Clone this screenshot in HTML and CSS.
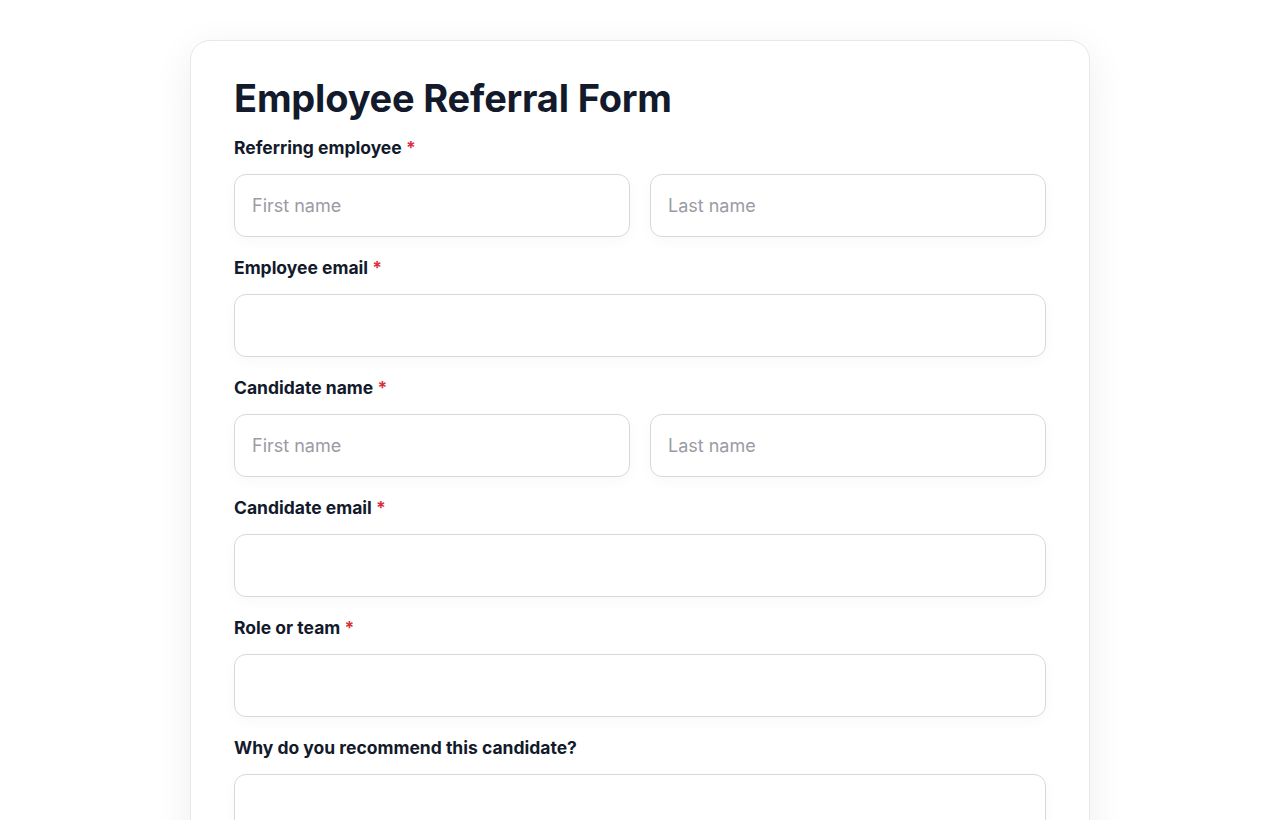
FILE: index.html
```html
<!DOCTYPE html>
<html>

<head>
  <link rel="stylesheet" href="styles.css">
</head>

<body>
  <div class="card">
    <h1>Employee Referral Form</h1>

    <div class="field">
      <label>Referring employee <span class="req">*</span></label>
      <div class="row">
        <input type="text" placeholder="First name">
        <input type="text" placeholder="Last name">
      </div>
    </div>

    <div class="field">
      <label>Employee email <span class="req">*</span></label>
      <input type="email">
    </div>

    <div class="field">
      <label>Candidate name <span class="req">*</span></label>
      <div class="row">
        <input type="text" placeholder="First name">
        <input type="text" placeholder="Last name">
      </div>
    </div>

    <div class="field">
      <label>Candidate email <span class="req">*</span></label>
      <input type="email">
    </div>

    <div class="field">
      <label>Role or team <span class="req">*</span></label>
      <input type="text">
    </div>

    <div class="field">
      <label>Why do you recommend this candidate?</label>
      <textarea rows="5"></textarea>
    </div>
  </div>
</body>

</html>
```

FILE: styles.css
```css
:root {
  --text: #131a2b;
  --muted: #9a9ca4;
  --border: #d6d8de;
  --card-border: #e6e8ec;
  --danger: #d9303c;
}

* {
  margin: 0;
  padding: 0;
  box-sizing: border-box;
  font-family: 'Inter', 'Noto Sans', Arial, sans-serif;
}

body {
  background-color: #ffffff;
  color: var(--text);
  padding-top: 40px;
}

.card {
  width: 900px;
  margin: 0 auto;
  background-color: #ffffff;
  border: 1px solid var(--card-border);
  border-radius: 20px;
  padding: 35px 43px 40px;
  box-shadow: 0 10px 40px rgba(20, 30, 60, 0.07);
}

h1 {
  font-size: 38px;
  font-weight: 700;
  line-height: 44px;
  letter-spacing: -0.2px;
  margin-bottom: 16px;
}

.field {
  margin-bottom: 19px;
}

label {
  display: block;
  font-size: 17.5px;
  font-weight: 650;
  line-height: 24px;
  margin-bottom: 14px;
}

.req {
  color: var(--danger);
}

.row {
  display: flex;
  gap: 20px;
}

input,
textarea {
  display: block;
  width: 100%;
  height: 63px;
  padding: 0 17px;
  border: 1px solid var(--border);
  border-radius: 12px;
  font-size: 18px;
  color: var(--text);
  background-color: #ffffff;
  box-shadow: 0 4px 14px rgba(20, 30, 60, 0.03);
  outline: none;
}

textarea {
  height: 150px;
  padding: 16px 17px;
  resize: none;
}

input::placeholder {
  color: var(--muted);
}
```
